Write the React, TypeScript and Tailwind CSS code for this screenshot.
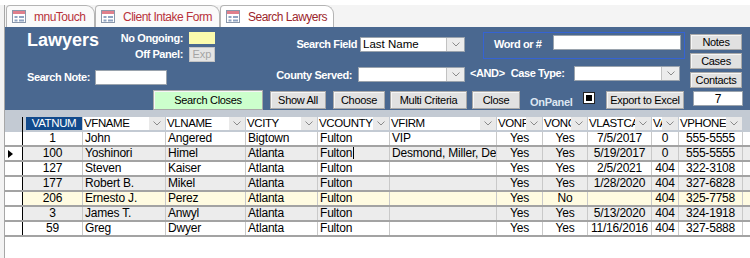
import React from "react";

type Col = { name: string; w: string; align: string };

const cols: Col[] = [
  { name: "VATNUM", w: "w-[60px]", align: "text-center" },
  { name: "VFNAME", w: "w-[83px]", align: "text-left" },
  { name: "VLNAME", w: "w-[80px]", align: "text-left" },
  { name: "VCITY", w: "w-[72px]", align: "text-left" },
  { name: "VCOUNTY", w: "w-[72px]", align: "text-left" },
  { name: "VFIRM", w: "w-[107px]", align: "text-left" },
  { name: "VONF", w: "w-[46px]", align: "text-center" },
  { name: "VONG", w: "w-[45px]", align: "text-center" },
  { name: "VLASTCA", w: "w-[64px]", align: "text-center" },
  { name: "VA", w: "w-[27px]", align: "text-center" },
  { name: "VPHONE", w: "w-[64px]", align: "text-center" },
];

const rows = [
  ["1", "John", "Angered", "Bigtown", "Fulton", "VIP", "Yes", "Yes", "7/5/2017", "0", "555-5555"],
  ["100", "Yoshinori", "Himel", "Atlanta", "Fulton", "Desmond, Miller, Desmond", "Yes", "Yes", "5/19/2017", "0", "555-5555"],
  ["127", "Steven", "Kaiser", "Atlanta", "Fulton", "", "Yes", "Yes", "2/5/2021", "404", "322-3108"],
  ["177", "Robert B.", "Mikel", "Atlanta", "Fulton", "", "Yes", "Yes", "1/28/2020", "404", "327-6828"],
  ["206", "Ernesto J.", "Perez", "Atlanta", "Fulton", "", "Yes", "No", "", "404", "325-7758"],
  ["3", "James T.", "Anwyl", "Atlanta", "Fulton", "", "Yes", "Yes", "5/13/2020", "404", "324-1918"],
  ["59", "Greg", "Dwyer", "Atlanta", "Fulton", "", "Yes", "Yes", "11/16/2016", "404", "327-5888"],
];

const rowBg = [
  "bg-white",
  "bg-[#ececec]",
  "bg-white",
  "bg-[#ececec]",
  "bg-[#fffbe1]",
  "bg-[#ececec]",
  "bg-white",
];

function Chevron() {
  return (
    <svg width="8" height="5" viewBox="0 0 8 5">
      <polyline points="0.5,0.5 4,4 7.5,0.5" fill="none" stroke="#8a8a8a" strokeWidth="1" />
    </svg>
  );
}

function FormIcon() {
  return (
    <svg width="14" height="13" viewBox="0 0 14 13" className="shrink-0">
      <rect x="0.5" y="0.5" width="13" height="12" fill="#fff" stroke="#8a97ab" />
      <rect x="1" y="1" width="12" height="3" fill="#e07f8c" />
      <rect x="2.5" y="6" width="3" height="2" fill="#8fa3c2" />
      <rect x="7" y="6" width="5" height="2" fill="#8fa3c2" />
      <rect x="2.5" y="9.5" width="3" height="2" fill="#8fa3c2" />
      <rect x="7" y="9.5" width="5" height="2" fill="#8fa3c2" />
    </svg>
  );
}

function Combo({ className, value }: { className: string; value?: string }) {
  return (
    <div className={`flex h-[15px] bg-white border border-[#9aa3ad] ${className}`}>
      <div className="flex-1 min-w-0 pl-[2px] text-[11.5px] leading-[13px] text-black whitespace-nowrap overflow-hidden">
        {value}
      </div>
      <div className="w-[18px] h-full bg-[#ececec] border-l border-[#c2c2c2] flex items-center justify-center">
        <Chevron />
      </div>
    </div>
  );
}

function Label({ children, className = "" }: { children: React.ReactNode; className?: string }) {
  return (
    <div className={`text-[11px] font-bold tracking-[-0.4px] text-white whitespace-nowrap ${className}`}>
      {children}
    </div>
  );
}

function Btn({ label, className }: { label: string; className: string }) {
  return (
    <button
      className={`flex items-center justify-center border border-[#a9a9a9] text-[11px] tracking-[-0.3px] text-black shadow-[inset_1px_1px_0_#f6f6f6] ${className}`}
    >
      {label}
    </button>
  );
}

function Tab({ label, active, className }: { label: string; active?: boolean; className: string }) {
  return (
    <div
      className={`flex items-center h-[22px] border border-b-0 border-[#b4b4b4] rounded-tl-[4px] rounded-tr-[9px] pl-[5px] ${
        active ? "bg-white" : "bg-[#fafafa]"
      } ${className}`}
    >
      <FormIcon />
      <span
        className={`ml-[8px] text-[12px] tracking-[-0.5px] whitespace-nowrap ${
          active ? "text-[#9c262c]" : "text-[#b8323b]"
        }`}
      >
        {label}
      </span>
    </div>
  );
}

function HeadCell({ col }: { col: Col }) {
  return (
    <div className={`${col.w} h-[13px] flex pr-[1px] shrink-0`}>
      <div className="flex-1 min-w-0 bg-white overflow-hidden whitespace-nowrap text-[11.5px] tracking-[-0.4px] leading-[13px] pl-[1px] text-black">
        {col.name}
      </div>
      <div className="w-[16px] shrink-0 bg-[#e9e9e9] flex items-center justify-center">
        <Chevron />
      </div>
    </div>
  );
}

export default function App() {
  return (
    <div className="w-[750px] h-[258px] bg-white overflow-hidden font-['Liberation_Sans',Arial,sans-serif]">
      <div className="h-[5px]" />
      <div className="flex h-[253px]">
        <div className="w-[5px] shrink-0 bg-[#f3f3f3] border-r border-[#a7a7a7]" />
        <div className="flex-1 flex flex-col min-w-0">
          {/* tabs */}
          <div className="h-[22px] bg-[#f4f4f4] flex items-end pl-[1px]">
            <Tab label="mnuTouch" className="w-[89px]" />
            <Tab label="Client Intake Form" className="w-[125px]" />
            <Tab label="Search Lawyers" active className="w-[114px]" />
          </div>

          {/* form header */}
          <div className="h-[83px] bg-[#4a6890] flex flex-col">
            <div className="flex h-[62px]">
              <div className="w-[215px] pl-[22px] shrink-0">
                <div className="flex mt-[3px]">
                  <div className="w-[80px] text-[18px] font-bold leading-[20px] text-white">Lawyers</div>
                  <div className="grid grid-cols-[76px_26px] gap-x-[6px] gap-y-[3px] mt-[2px]">
                    <Label className="text-right leading-[12px]">No Ongoing:</Label>
                    <div className="h-[12px] bg-[#fbfbad]" />
                    <Label className="text-right leading-[15px]">Off Panel:</Label>
                    <div className="h-[15px] bg-[#e4e4e4] border border-[#c4c4c4] flex items-center justify-center text-[11px] text-[#a4a4a4]">
                      Exp
                    </div>
                  </div>
                </div>
                <div className="flex items-center mt-[7px] gap-[5px]">
                  <Label>Search Note:</Label>
                  <div className="w-[72px] h-[15px] bg-white border border-[#9aa3ad]" />
                </div>
              </div>

              <div className="w-[245px] shrink-0 flex flex-col items-end">
                <div className="flex items-center mt-[9px] gap-[3px]">
                  <Label>Search Field</Label>
                  <Combo className="w-[105px]" value="Last Name" />
                </div>
                <div className="flex items-center mt-[14px] gap-[6px]">
                  <Label>County Served:</Label>
                  <Combo className="w-[107px]" />
                </div>
              </div>

              <div className="w-[220px] shrink-0 pr-[5px]">
                <div className="ml-[18px] mt-[5px] w-[202px] h-[27px] border border-[#3563d4] flex items-start pt-[2px] pl-[10px] pr-[3px]">
                  <Label className="mt-[1px]">Word or #</Label>
                  <div className="ml-auto w-[128px] h-[15px] bg-white border border-[#9aa3ad]" />
                </div>
                <div className="flex items-center mt-[6px] pl-[5px]">
                  <Label>&lt;AND&gt;</Label>
                  <Label className="ml-[6px]">Case Type:</Label>
                  <Combo className="ml-auto w-[106px]" />
                </div>
              </div>

              <div className="pl-[5px] pt-[7px] flex flex-col gap-[3px]">
                <Btn label="Notes" className="w-[52px] h-[16px] bg-[#e1e1e1]" />
                <Btn label="Cases" className="w-[52px] h-[16px] bg-[#e1e1e1]" />
                <Btn label="Contacts" className="w-[52px] h-[16px] bg-[#e1e1e1]" />
              </div>
            </div>

            <div className="flex items-start pl-[148px] mt-[2px]">
              <Btn label="Search Closes" className="w-[110px] h-[20px] bg-[#ccffcc]" />
              <Btn label="Show All" className="ml-[7px] mt-[1px] w-[56px] h-[18px] bg-[#e1e1e1]" />
              <Btn label="Choose" className="ml-[7px] mt-[1px] w-[52px] h-[18px] bg-[#e1e1e1]" />
              <Btn label="Multi Criteria" className="ml-[5px] mt-[1px] w-[77px] h-[18px] bg-[#e1e1e1]" />
              <Btn label="Close" className="ml-[5px] mt-[1px] w-[48px] h-[18px] bg-[#e1e1e1]" />
              <div className="ml-[10px] mt-[4px] w-[43px] text-[11px] font-bold tracking-[-0.3px] text-[#dde6f2] whitespace-nowrap">
                OnPanel
              </div>
              <div className="ml-[10px] mt-[2px] w-[12px] h-[12px] bg-white border border-[#222] flex items-center justify-center">
                <div className="w-[6px] h-[6px] bg-black" />
              </div>
              <Btn label="Export to Excel" className="ml-[11px] mt-[1px] w-[78px] h-[18px] bg-[#e1e1e1]" />
              <div className="ml-[9px] mt-[1px] w-[50px] h-[15px] bg-white border border-[#9aa3ad] flex items-center justify-center text-[12px] text-black">
                7
              </div>
            </div>
          </div>

          {/* datasheet */}
          <div className="h-[7px] bg-[#c3cad3]" />
          <div className="flex h-[15px] bg-[#c3cad3]">
            <div className="w-[18px] h-[15px] shrink-0 border-r border-black" />
            <div className="w-[60px] h-[13px] pl-[3px] pr-[1px] shrink-0">
              <div className="h-full bg-[#124a8c] text-white text-center text-[11.5px] tracking-[-0.4px] leading-[13px]">
                VATNUM
              </div>
            </div>
            {cols.slice(1).map((c) => (
              <HeadCell key={c.name} col={c} />
            ))}
          </div>
          {rows.map((r, i) => (
            <div key={i} className={`flex h-[15px] border-b-2 border-[#a3a3a3] ${rowBg[i]}`}>
              <div className="w-[18px] shrink-0 bg-white border-r border-black flex items-center pl-[3px]">
                {i === 1 && (
                  <svg width="5" height="8" viewBox="0 0 5 8">
                    <polygon points="0,0 5,4 0,8" fill="#000" />
                  </svg>
                )}
              </div>
              {cols.map((c, j) => (
                <div
                  key={c.name}
                  className={`${c.w} ${c.align} shrink-0 border-r border-[#c9c9c9] px-[2px] overflow-hidden whitespace-nowrap text-[12px] tracking-[-0.2px] leading-[13px] text-black`}
                >
                  {r[j]}
                  {i === 1 && j === 4 && <span className="inline-block w-px h-[12px] bg-black align-top ml-[1px]" />}
                </div>
              ))}
            </div>
          ))}
        </div>
      </div>
    </div>
  );
}
